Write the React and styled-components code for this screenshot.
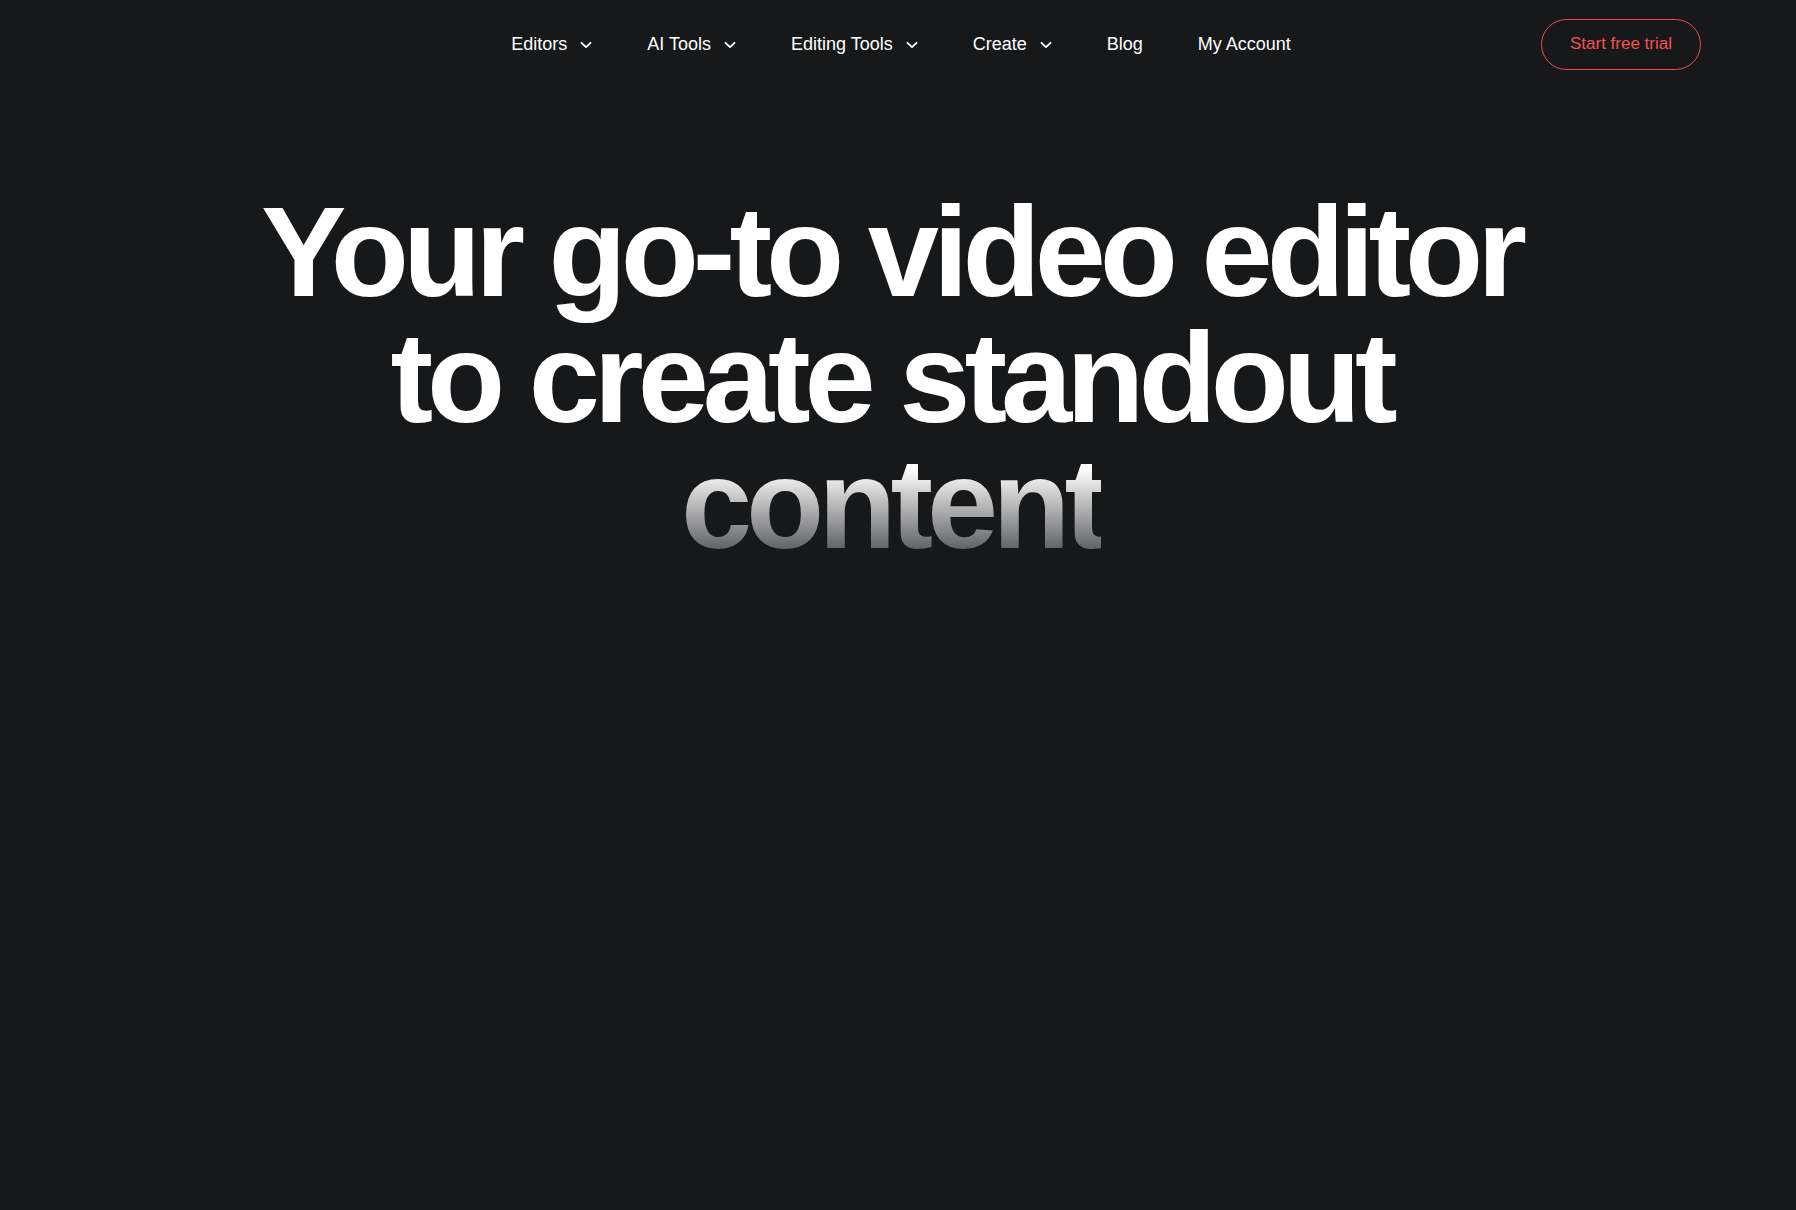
import styled, { createGlobalStyle } from "styled-components";

const GlobalStyle = createGlobalStyle`
  html, body {
    margin: 0;
    padding: 0;
    background: #17181a;
  }
  body {
    font-family: "Liberation Sans", Arial, sans-serif;
    color: #fff;
  }
`;

const Page = styled.div`
  min-height: 1210px;
  background: #17181a;
`;

const Header = styled.header`
  display: grid;
  grid-template-columns: 1fr auto 1fr;
  align-items: center;
  height: 88px;
  padding: 0 95px;
`;

const Nav = styled.nav`
  grid-column: 2;
  display: flex;
  align-items: center;
  gap: 55px;
  margin-left: 6px;
`;

const NavItem = styled.a`
  display: flex;
  align-items: center;
  gap: 13px;
  font-size: 18px;
  color: #fff;
  text-decoration: none;
  cursor: pointer;
`;

const Chevron = styled.svg`
  width: 12px;
  height: 8px;
  margin-top: 1px;
`;

const Actions = styled.div`
  grid-column: 3;
  display: flex;
  justify-content: flex-end;
`;

const TrialButton = styled.button`
  width: 160px;
  height: 51px;
  border: 1px solid #f0484b;
  border-radius: 999px;
  background: transparent;
  color: #f45151;
  font-family: "Liberation Sans", Arial, sans-serif;
  font-size: 17px;
  cursor: pointer;
`;

const Hero = styled.section`
  display: flex;
  justify-content: center;
  padding-top: 101px;
  padding-right: 14px;
`;

const Headline = styled.h1`
  margin: 0;
  text-align: center;
  font-size: 128px;
  line-height: 126px;
  font-weight: 700;
  letter-spacing: -0.047em;
  color: #fff;
`;

const Line = styled.span`
  display: block;
`;

const Faded = styled.span`
  display: inline-block;
  background: linear-gradient(180deg, #ffffff 22%, #5c5d5f 88%);
  -webkit-background-clip: text;
  background-clip: text;
  color: transparent;
`;

const ChevronIcon = () => (
  <Chevron viewBox="0 0 12 8" fill="none">
    <path d="M1.5 1.8 6 6.2l4.5-4.4" stroke="#fff" strokeWidth="1.8" strokeLinecap="round" strokeLinejoin="round" />
  </Chevron>
);

const links = [
  { label: "Editors", menu: true },
  { label: "AI Tools", menu: true },
  { label: "Editing Tools", menu: true },
  { label: "Create", menu: true },
  { label: "Blog" },
  { label: "My Account" },
];

export default function App() {
  return (
    <Page>
      <GlobalStyle />
      <Header>
        <Nav>
          {links.map((l) => (
            <NavItem key={l.label}>
              {l.label}
              {l.menu && <ChevronIcon />}
            </NavItem>
          ))}
        </Nav>
        <Actions>
          <TrialButton>Start free trial</TrialButton>
        </Actions>
      </Header>
      <Hero>
        <Headline>
          <Line>Your go-to video editor</Line>
          <Line>to create standout</Line>
          <Line>
            <Faded>content</Faded>
          </Line>
        </Headline>
      </Hero>
    </Page>
  );
}
